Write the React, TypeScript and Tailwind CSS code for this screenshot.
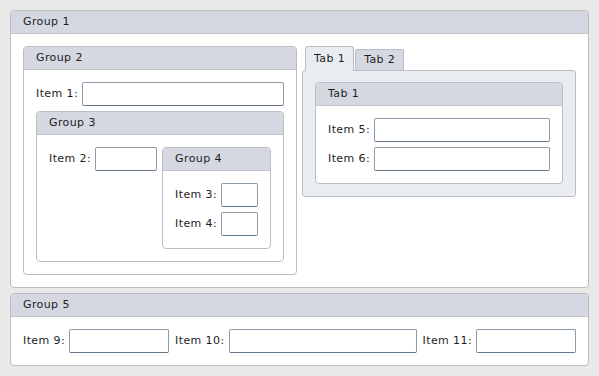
import React from "react";

const Group: React.FC<{ title: string; className?: string; children: React.ReactNode; bodyClass?: string }> = ({
  title,
  className = "",
  children,
  bodyClass = "",
}) => (
  <div className={`border border-[#babdc3] rounded-[4px] bg-white overflow-hidden ${className}`}>
    <div className="h-[23px] px-3 flex items-center bg-[#d5d8e0] border-b border-[#c2c5cb]">{title}</div>
    <div className={`p-3 ${bodyClass}`}>{children}</div>
  </div>
);

const Input: React.FC<{ className?: string }> = ({ className = "" }) => (
  <input
    type="text"
    className={`h-[24px] bg-white border border-[#8e9ba8] border-b-[#64768a] rounded-[2px] outline-none ${className}`}
  />
);

const Field: React.FC<{ label: string; inputClass?: string; className?: string }> = ({
  label,
  inputClass = "flex-1 min-w-0",
  className = "",
}) => (
  <div className={`flex items-center gap-1 ${className}`}>
    <span className="whitespace-nowrap">{label}</span>
    <Input className={inputClass} />
  </div>
);

const App: React.FC = () => {
  return (
    <div
      className="w-[599px] h-[376px] bg-[#e9e9e9] p-[10px] flex flex-col gap-[5px] text-[11px] tracking-[0.4px] text-[#1e1e1e]"
      style={{ fontFamily: '"DejaVu Sans", Verdana, sans-serif' }}>
      <Group title="Group 1">
        <div className="grid grid-cols-2 gap-[5px] items-start">
          <Group title="Group 2" bodyClass="flex flex-col gap-[5px]">
            <Field label="Item 1:" />
            <Group title="Group 3" bodyClass="flex items-start gap-[5px]">
              <Field label="Item 2:" inputClass="w-[62px]" />
              <Group title="Group 4" className="w-[109px]" bodyClass="flex flex-col gap-[5px]">
                <Field label="Item 3:" inputClass="w-[37px]" />
                <Field label="Item 4:" inputClass="w-[37px]" />
              </Group>
            </Group>
          </Group>

          <div className="flex flex-col">
            <div className="flex items-end pl-[3px] gap-px">
              <div className="relative z-10 -mb-px h-[25px] px-2 flex items-center border border-b-0 border-[#babdc3] rounded-t-[3px] bg-[#e9ecf1]">
                Tab 1
              </div>
              <div className="h-[21px] px-2 flex items-center border border-b-0 border-[#babdc3] rounded-t-[2px] bg-[#d5d8e0]">
                Tab 2
              </div>
            </div>
            <div className="border border-[#babdc3] rounded-[3px] bg-[#e9ecf1] pt-[11px] px-3 pb-3">
              <Group title="Tab 1" bodyClass="flex flex-col gap-[5px]">
                <Field label="Item 5:" />
                <Field label="Item 6:" />
              </Group>
            </div>
          </div>
        </div>
      </Group>

      <Group title="Group 5" bodyClass="flex items-center gap-[6px]">
        <Field label="Item 9:" inputClass="w-[100px]" />
        <Field label="Item 10:" className="flex-1" />
        <Field label="Item 11:" inputClass="w-[100px]" />
      </Group>
    </div>
  );
};

export default App;
